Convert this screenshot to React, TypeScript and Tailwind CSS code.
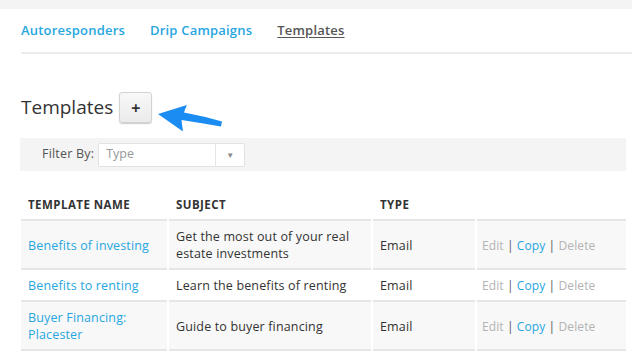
import React from 'react'

const font = { fontFamily: '"Open Sans", "Liberation Sans", sans-serif' }

type Row = { name: string[]; subject: string[] }

const rows: Row[] = [
  { name: ['Benefits of investing'], subject: ['Get the most out of your real', 'estate investments'] },
  { name: ['Benefits to renting'], subject: ['Learn the benefits of renting'] },
  { name: ['Buyer Financing:', 'Placester'], subject: ['Guide to buyer financing'] },
]

function Arrow() {
  return (
    <svg width="68" height="30" viewBox="0 0 68 30" className="ml-[4px] mt-[11px] shrink-0 overflow-visible">
      <path
        d="M2 11 L31 2 Q29 6 28 9.5 Q47 13 66 18.5 L65 23.5 Q45 20 25.5 17 Q26 22 27 28.5 Z"
        fill="#1a8cf2"
      />
    </svg>
  )
}

export default function App() {
  return (
    <div className="h-[353px] w-[632px] overflow-hidden bg-white text-[#333]" style={font}>
      <div className="h-[9px] bg-[#f4f4f4]" />

      <nav className="flex h-[43px] items-center gap-[25px] pl-[21px] text-[13px] font-semibold tracking-[0.2px]">
        <a className="text-[#27a6df]">Autoresponders</a>
        <a className="text-[#27a6df]">Drip Campaigns</a>
        <a className="text-[#555] underline underline-offset-2">Templates</a>
      </nav>
      <div className="ml-[21px] h-[2px] bg-[#ebebeb]" />

      <div className="mt-[38px] flex h-[31px] items-start pl-[21px]">
        <h1 className="flex h-[31px] items-center text-[19px] font-normal text-[#333]">Templates</h1>
        <button className="ml-[6px] flex h-[31px] w-[33px] shrink-0 items-center justify-center rounded-[3px] border border-[#d2d2d2] bg-gradient-to-b from-[#f8f8f8] to-[#ebebeb] text-[16px] font-bold leading-none text-[#333] shadow-[0_1px_1px_rgba(0,0,0,0.2)]">
          +
        </button>
        <Arrow />
      </div>

      <div className="ml-[20px] mr-[6px] mt-[15px] flex h-[33px] items-center bg-[#f4f4f4] pl-[22px]">
        <span className="text-[12.5px] tracking-[0.2px] text-[#555]">Filter By:</span>
        <div className="ml-[4px] flex h-[24px] w-[147px] items-stretch rounded-[2px] border border-[#e2e2e2] bg-white">
          <span className="flex flex-1 items-center pl-[7px] text-[12.5px] text-[#999]">Type</span>
          <span className="flex w-[29px] items-center justify-center border-l border-[#e6e6e6] text-[8px] text-[#888]">▼</span>
        </div>
      </div>

      <div className="ml-[21px] mr-[6px] mt-[19px] grid grid-cols-[146px_202px_102px_1fr] gap-x-[2px] text-[12.5px] leading-[17px] tracking-[0.15px]">
        {['TEMPLATE NAME', 'SUBJECT', 'TYPE', ''].map((h, i) => (
          <div
            key={i}
            className="flex h-[31px] items-center border-b-2 border-[#e6e6e6] px-[7px] text-[11.5px] font-bold tracking-[0.45px] text-[#333]"
          >
            {h}
          </div>
        ))}
        {rows.map((r, i) => {
          const bg = i === 1 ? 'bg-white' : 'bg-[#f8f8f8]'
          const cell = `flex flex-col justify-center border-b-2 border-[#e6e6e6] px-[7px] pt-[7px] pb-[6px] ${bg}`
          return (
            <React.Fragment key={i}>
              <div className={`${cell} text-[#27a6df]`}>
                {r.name.map((t) => (
                  <span key={t}>{t}</span>
                ))}
              </div>
              <div className={`${cell} text-[#333]`}>
                {r.subject.map((t) => (
                  <span key={t}>{t}</span>
                ))}
              </div>
              <div className={`${cell} text-[#333]`}>Email</div>
              <div className={`${cell} !px-[5px]`}>
                <span className="text-[12px] tracking-[0.1px]">
                  <span className="text-[#b3b3b3]">Edit</span>
                  <span className="text-[#555]"> | </span>
                  <span className="text-[#27a6df]">Copy</span>
                  <span className="text-[#555]"> | </span>
                  <span className="text-[#b3b3b3]">Delete</span>
                </span>
              </div>
            </React.Fragment>
          )
        })}
      </div>
    </div>
  )
}
